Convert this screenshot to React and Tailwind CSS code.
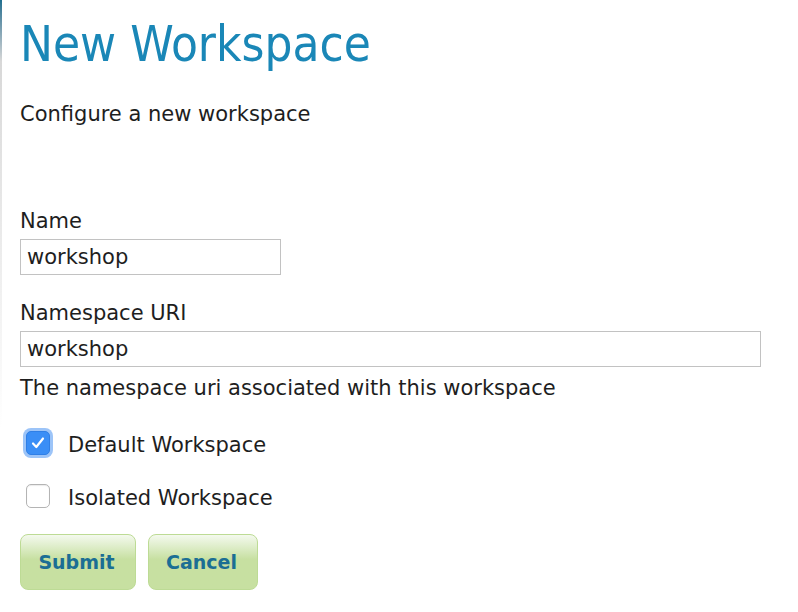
import React, { useState } from 'react';

const Checkbox = ({ checked, onChange }) => (
    <button
        type="button"
        onClick={onChange}
        className={
            checked
                ? 'w-6 h-6 rounded-[5px] bg-[#3a8ef6] border border-[#2f7fe6] ring-[3px] ring-[#9cc4f8] flex items-center justify-center shrink-0'
                : 'w-6 h-6 rounded-[5px] bg-white border border-[#b4b4b4] shadow-[inset_0_1px_1px_rgba(0,0,0,0.08)] shrink-0'
        }
    >
        {checked && (
            <svg width="16" height="16" viewBox="0 0 16 16" fill="none">
                <path d="M3 8.5 L6.3 12 L13 3.5" stroke="white" strokeWidth="2.2" strokeLinecap="round" strokeLinejoin="round" />
            </svg>
        )}
    </button>
);

const App = () => {
    const [name, setName] = useState('workshop');
    const [uri, setUri] = useState('workshop');
    const [isDefault, setIsDefault] = useState(true);
    const [isolated, setIsolated] = useState(false);

    return (
        <div
            className="min-h-screen bg-white flex text-[#1e1e1e]"
            style={{ fontFamily: '"DejaVu Sans", Verdana, sans-serif' }}
        >
            {/* page edge */}
            <div className="w-[2px] shrink-0 bg-linear-to-b from-[#1d6f8f] via-[#d8d8d8] via-10% to-transparent to-70%" />

            <div className="pl-[18px] pt-5 flex-1">
                <h1
                    className="text-[49px] leading-[49px] text-[#1a87b7]"
                    style={{ fontFamily: '"DejaVu Sans Condensed", "DejaVu Sans", sans-serif' }}
                >
                    New Workspace
                </h1>
                <p className="mt-[33px] text-[21px] leading-[24px]">Configure a new workspace</p>

                <form className="mt-[83px]" onSubmit={e => e.preventDefault()}>
                    <label className="block text-[21px] leading-[24px]">Name</label>
                    <input
                        value={name}
                        onChange={e => setName(e.target.value)}
                        className="mt-[6px] block w-[261px] h-[36px] border border-[#c2c2c2] px-[6px] text-[21px] outline-none"
                    />

                    <label className="block mt-[26px] text-[21px] leading-[24px]">Namespace URI</label>
                    <input
                        value={uri}
                        onChange={e => setUri(e.target.value)}
                        className="mt-[6px] block w-[741px] h-[36px] border border-[#c2c2c2] px-[6px] text-[21px] outline-none"
                    />
                    <p className="mt-[9px] text-[21px] leading-[24px]">The namespace uri associated with this workspace</p>

                    <div className="mt-[31px] flex items-center h-6 pl-[6px] gap-[18px]">
                        <Checkbox checked={isDefault} onChange={() => setIsDefault(!isDefault)} />
                        <span className="text-[21px] leading-[24px] pt-[3px]">Default Workspace</span>
                    </div>
                    <div className="mt-[29px] flex items-center h-6 pl-[6px] gap-[18px]">
                        <Checkbox checked={isolated} onChange={() => setIsolated(!isolated)} />
                        <span className="text-[21px] leading-[24px] pt-[3px]">Isolated Workspace</span>
                    </div>

                    <div className="mt-[26px] flex gap-3">
                        <button
                            type="submit"
                            className="w-[116px] h-[56px] pr-[3px] rounded-[8px] border border-[#bddb95] bg-linear-to-b from-[#f4f9ee] to-[#c7e0a1] to-45% text-[19px] font-bold text-[#1b6e94]"
                        >
                            Submit
                        </button>
                        <button
                            type="button"
                            className="w-[110px] h-[56px] pr-[3px] rounded-[8px] border border-[#bddb95] bg-linear-to-b from-[#f4f9ee] to-[#c7e0a1] to-45% text-[19px] font-bold text-[#1b6e94]"
                        >
                            Cancel
                        </button>
                    </div>
                </form>
            </div>
        </div>
    );
};

export default App;
